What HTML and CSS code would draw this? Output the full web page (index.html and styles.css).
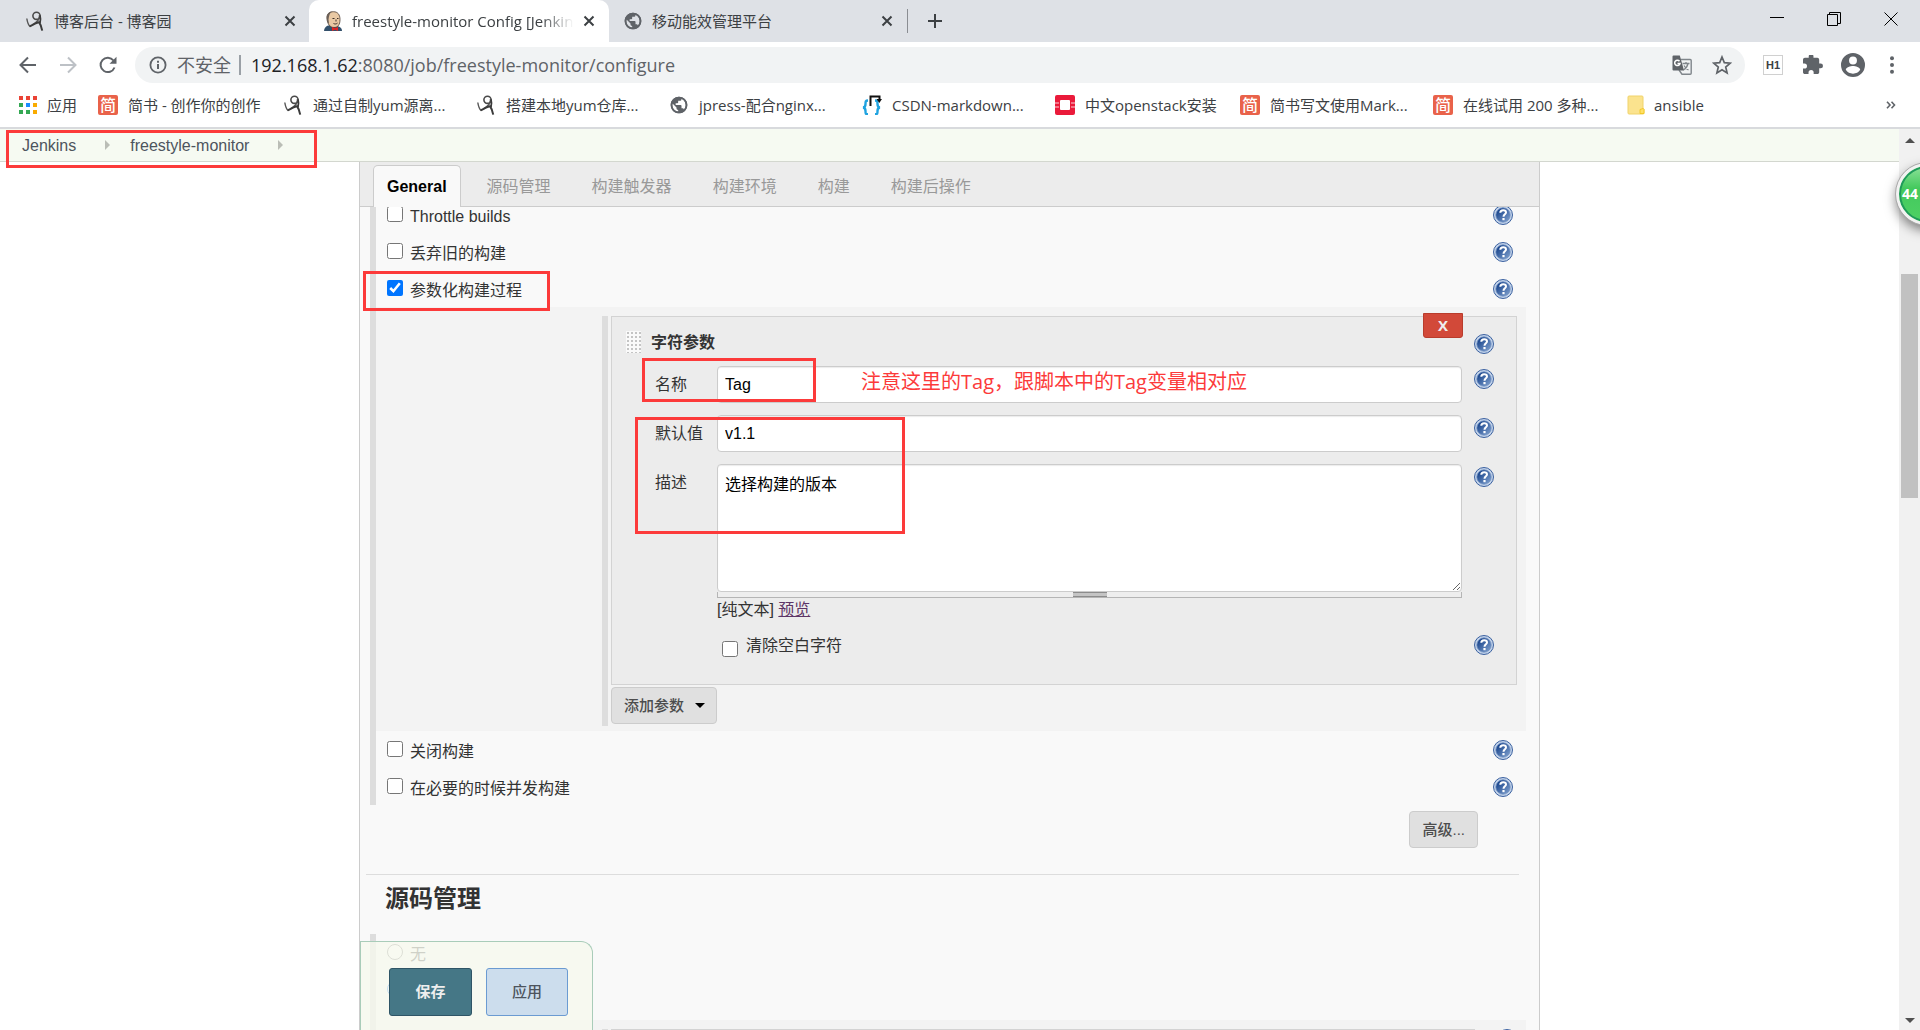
FILE: index.html
```html
<!DOCTYPE html>
<html lang="zh-CN">
<head>
<meta charset="utf-8">
<title>freestyle-monitor Config [Jenkins]</title>
<link rel="stylesheet" href="styles.css">
</head>
<body>
<svg class="defs" aria-hidden="true">
  <defs>
    <linearGradient id="help-fill" x1="0" y1="0" x2="1" y2="1">
      <stop offset="0.2" stop-color="#1f4a90"/><stop offset="1" stop-color="#86a6d2"/>
    </linearGradient>
    <symbol id="i-help" viewBox="0 0 20 20">
      <circle cx="10" cy="10" r="9.5" fill="#c3d3ea" stroke="#3c62a0"/>
      <circle cx="10" cy="10" r="7.2" fill="url(#help-fill)" stroke="#6f8fc0" stroke-width="0.8"/>
      <path d="M7.300 7.800C7.300 6 8.500 5.200 10.200 5.200C11.900 5.200 13 6 13 7.400C13 9.300 10.500 9.300 10.500 11.800" fill="none" stroke="#fff" stroke-width="2"/>
      <rect x="9.400" y="13" width="2.200" height="2.200" fill="#fff"/>
    </symbol>
    <symbol id="i-cnblogs" viewBox="0 0 18 20">
      <circle cx="10.500" cy="4.800" r="3.600" fill="none" stroke="#4a4a4a" stroke-width="1.600"/>
      <path d="M13.500 4C14 8 10.500 11.500 6.500 13.800M.8 7.500C1.400 11.500 2.200 13.900 4.200 15.700" fill="none" stroke="#555" stroke-width="1.400"/>
      <path d="M3.800 15.400C7 13.500 10 11.800 13 11.200C14.500 13.200 15.500 16 16.200 19.600" fill="none" stroke="#3b3b3b" stroke-width="2"/>
      <path d="M14 4.500C14.800 7 14.600 9.500 14 12" fill="none" stroke="#3b3b3b" stroke-width="1.700"/>
    </symbol>
    <symbol id="i-globe" viewBox="0 0 24 24">
      <path fill="#5f6368" d="M12 2C6.480 2 2 6.480 2 12s4.480 10 10 10 10-4.480 10-10S17.520 2 12 2zm-1 17.930c-3.950-.49-7-3.850-7-7.930 0-.62.080-1.210.210-1.790L9 15v1c0 1.100.9 2 2 2v1.930zm6.900-2.540c-.26-.81-1-1.390-1.900-1.390h-1v-3c0-.55-.45-1-1-1H8v-2h2c.55 0 1-.45 1-1V7h2c1.100 0 2-.9 2-2v-.41c2.930 1.190 5 4.060 5 7.410 0 2.080-.8 3.970-2.100 5.390z"/>
      <path fill="none" stroke="#5f6368" stroke-width="2" d="M12 3a9 9 0 100 18 9 9 0 100-18z"/>
    </symbol>
    <symbol id="i-x" viewBox="0 0 12 12"><path d="M1.500 1.500l9 9M10.500 1.500l-9 9" stroke="#3c4043" stroke-width="2" fill="none"/></symbol>
    <symbol id="i-caret" viewBox="0 0 12 6"><path d="M0 6L6 0l6 6z" fill="#505050"/></symbol>
  </defs>
</svg>

<header class="browser">
  <div class="tabstrip">
    <div class="tab">
      <svg class="fav"><use href="#i-cnblogs"/></svg>
      <span class="tab-title">博客后台 - 博客园</span>
      <button class="tab-close" aria-label="关闭标签页"><svg><use href="#i-x"/></svg></button>
    </div>
    <div class="tab tab-active">
      <svg class="fav" viewBox="0 0 18 20">
        <path d="M0 20C0 17 2 15.500 4 14.500L12 14.500C15 15.500 18 16.500 18 20z" fill="#33506b"/>
        <path d="M3 8C2.500 3 5.500.7 9.500.7S16 3.500 16 8.500 14 16.500 10 16.500 3.500 13 3 8z" fill="#e9c9a4" stroke="#4b3b31" stroke-width="0.800"/>
        <path d="M3 8.500C2 4 4 1 8 .6C5.500 2.500 5 5 4.500 8.500L5 12.500C3.500 12 3 10.500 3 8.500z" fill="#6b6058"/>
        <path d="M8.500 7.500h2M13 7.500h1.500M12 8.500v2M9.500 12.500c1.500.8 3 .5 4-.4" stroke="#3a2d26" stroke-width="1" fill="none"/>
        <path d="M8 16l3 1.200L14 16v4l-3-1.200L8 20z" fill="#e02424"/>
      </svg>
      <span class="tab-title">freestyle-monitor Config [Jenkins]</span>
      <button class="tab-close" aria-label="关闭标签页"><svg><use href="#i-x"/></svg></button>
    </div>
    <div class="tab">
      <svg class="fav"><use href="#i-globe"/></svg>
      <span class="tab-title">移动能效管理平台</span>
      <button class="tab-close" aria-label="关闭标签页"><svg><use href="#i-x"/></svg></button>
    </div>
    <button class="new-tab" aria-label="新标签页"><svg viewBox="0 0 16 16"><path d="M8 1v14M1 8h14" stroke="#3c4043" stroke-width="2"/></svg></button>
    <div class="window-controls">
      <button aria-label="最小化"><svg viewBox="0 0 14 14"><path d="M0 5.500h14" stroke="#000"/></svg></button>
      <button aria-label="还原"><svg viewBox="0 0 14 14"><path d="M.5 2.500h10v11H.5zM2.500 2.500V.5h11v11h-3" stroke="#000" fill="none"/></svg></button>
      <button aria-label="关闭"><svg viewBox="0 0 14 14"><path d="M.5.5l13 13M13.500.5l-13 13" stroke="#000"/></svg></button>
    </div>
  </div>
  <div class="toolbar">
    <button class="nav" aria-label="后退"><svg viewBox="0 0 18 18"><path d="M17 9H2M9 1.500L1.500 9 9 16.500" fill="none" stroke="#5f6368" stroke-width="2"/></svg></button>
    <button class="nav" aria-label="前进"><svg viewBox="0 0 18 18"><path d="M1 9h15M9 1.500L16.500 9 9 16.500" fill="none" stroke="#bdc1c6" stroke-width="2"/></svg></button>
    <button class="nav" aria-label="重新加载"><svg viewBox="0 0 18 18"><path d="M15.500 11.500A7.200 7.200 0 1 1 14.500 4.500" fill="none" stroke="#5f6368" stroke-width="2"/><path d="M17.500.8v7h-7z" fill="#5f6368"/></svg></button>
    <div class="omnibox">
      <svg class="info" viewBox="0 0 18 18"><circle cx="9" cy="9" r="7.600" fill="none" stroke="#5f6368" stroke-width="1.800"/><path d="M9 8v5M9 4.800v2" stroke="#5f6368" stroke-width="2"/></svg>
      <span class="insecure">不安全</span>
      <span class="url"><b>192.168.1.62</b>:8080/job/freestyle-monitor/configure</span>
      <button class="ico" aria-label="翻译"><svg viewBox="0 0 20 20"><path d="M8.500 4.500h9.700a1 1 0 0 1 1 1v12.700a1 1 0 0 1-1 1H10L7 15" fill="#f1f3f4" stroke="#80868b" stroke-width="1.400"/><path d="M10.500 8.500h7M14 7v1.500M16 8.500c-.5 2.500-2 5-4.500 6.500M12 10.500c1 2 2.500 3.500 4.500 4.500" stroke="#80868b" stroke-width="1.300" fill="none"/><path d="M1.500.5h6.300L12 15.500H1.500a1 1 0 0 1-1-1v-13a1 1 0 0 1 1-1z" fill="#5f6368"/><path d="M7.500 6.200A2.700 2.700 0 1 0 8 8.500H5.500" fill="none" stroke="#fff" stroke-width="1.500"/></svg></button>
      <button class="ico" aria-label="收藏"><svg viewBox="0 0 20 20"><path d="M10 2l2.300 5.600 6 .5-4.600 3.900 1.400 5.900L10 14.800l-5.100 3.100 1.400-5.900L1.700 8.100l6-.5z" fill="none" stroke="#5f6368" stroke-width="1.700"/></svg></button>
    </div>
    <div class="extensions">
      <button class="h1-ext">H1</button>
      <button class="ico" aria-label="扩展程序"><svg viewBox="2 2 21 21"><path fill="#5f6368" d="M20.500 11H19V7c0-1.100-.9-2-2-2h-4V3.500a2.500 2.500 0 0 0-5 0V5H4c-1.100 0-2 .9-2 2v3.800h1.500a2.700 2.700 0 0 1 0 5.400H2V20c0 1.100.9 2 2 2h3.800v-1.500a2.700 2.700 0 0 1 5.400 0V22H17c1.100 0 2-.9 2-2v-4h1.500a2.500 2.500 0 0 0 0-5z"/></svg></button>
      <button class="avatar" aria-label="用户"><svg viewBox="2 2 20 20"><path fill="#5f6368" d="M12 2a10 10 0 1 0 0 20 10 10 0 0 0 0-20zm0 3a3.300 3.300 0 1 1 0 6.600A3.300 3.300 0 0 1 12 5zm0 14.200a7.200 7.200 0 0 1-6-3.200c0-2 4-3.100 6-3.100s6 1.100 6 3.100a7.200 7.200 0 0 1-6 3.200z"/></svg></button>
      <button class="menu" aria-label="菜单"><svg viewBox="0 0 6 18"><g fill="#5f6368"><circle cx="3" cy="2.200" r="2"/><circle cx="3" cy="9" r="2"/><circle cx="3" cy="15.800" r="2"/></g></svg></button>
    </div>
  </div>
  <nav class="bookmarks">
    <a href="#" class="apps"><svg class="fav" viewBox="0 0 18 18"><g fill="#ea4335"><path d="M0 0h4v4H0zM7 0h4v4H7zM14 0h4v4h-4z"/></g><path fill="#34a853" d="M0 7h4v4H0zM0 14h4v4H0z"/><path fill="#1a8cff" d="M7 7h4v4H7z"/><path fill="#f9ab00" d="M14 7h4v4h-4zM14 14h4v4h-4z"/><path fill="#34a853" d="M7 14h4v4H7z"/></svg>应用</a>
    <a href="#" class="bm bm-short"><i class="jian">简</i>简书 - 创作你的创作</a>
    <a href="#" class="bm"><svg class="fav"><use href="#i-cnblogs"/></svg>通过自制yum源离...</a>
    <a href="#" class="bm"><svg class="fav"><use href="#i-cnblogs"/></svg>搭建本地yum仓库...</a>
    <a href="#" class="bm"><svg class="fav"><use href="#i-globe"/></svg>jpress-配合nginx...</a>
    <a href="#" class="bm"><svg class="fav" viewBox="0 0 20 20"><path d="M6 5.500C3.500 5.500 3.500 6.500 3.500 9S3 12.300 1 12.500C3 12.700 3.500 13.500 3.500 16S3.500 19.200 6 19.200M13 5.500C15.500 5.500 15.500 6.500 15.500 9S16 12.300 18 12.500C16 12.700 15.500 13.500 15.500 16S15.500 19.200 13 19.200" fill="none" stroke="#1fa3e0" stroke-width="2.400"/><path d="M8.500 11V1.500h9V5" fill="none" stroke="#111" stroke-width="2"/><path d="M14.500 4h5.500l-2.700 4z" fill="#111"/></svg>CSDN-markdown...</a>
    <a href="#" class="bm bm-short"><svg class="fav" viewBox="0 0 20 20"><rect width="20" height="20" rx="2" fill="#ea1a3a"/><path d="M0 7.500h4v1H0zM0 11.500h4v1H0zM16 7.500h4v1h-4zM16 11.500h4v1h-4z" fill="#fff" opacity=".8"/><rect x="5" y="5" width="10" height="10" rx="1" fill="#fff"/></svg>中文openstack安装</a>
    <a href="#" class="bm"><i class="jian">简</i>简书写文使用Mark...</a>
    <a href="#" class="bm"><i class="jian">简</i>在线试用 200 多种...</a>
    <a href="#" class="bm"><svg class="fav folder" viewBox="0 0 18 20"><path d="M2 1h13a1 1 0 0 1 1 1v11l1 1v4a1 1 0 0 1-1 1H2a1 1 0 0 1-1-1V2a1 1 0 0 1 1-1z" fill="#fbe38e" stroke="#f0d36b"/><path d="M13 18.500v-4l3-1 1 1v4z" fill="#ffe066" stroke="#f0c419" stroke-width=".8"/></svg>ansible</a>
    <button class="more" aria-label="更多书签"><svg viewBox="0 0 10 8"><path d="M1 .8L4 4 1 7.200M5.500.8L8.500 4l-3 3.200" fill="none" stroke="#5f6368" stroke-width="1.600"/></svg></button>
  </nav>
</header>

<div class="viewport">
  <div class="page">
    <nav class="breadcrumbs">
      <a href="#">Jenkins</a><i class="crumb-arrow"></i>
      <a href="#">freestyle-monitor</a><i class="crumb-arrow"></i>
      <span class="mark mark-crumbs"></span>
    </nav>
    <main class="config">
      <nav class="config-tabs">
        <a href="#" class="active">General</a>
        <a href="#">源码管理</a>
        <a href="#">构建触发器</a>
        <a href="#">构建环境</a>
        <a href="#">构建</a>
        <a href="#">构建后操作</a>
      </nav>
      <div class="scroller">
        <form class="form">
          <section class="group">
            <div class="row"><input type="checkbox" id="throttle"><label for="throttle">Throttle builds</label><button type="button" class="help" aria-label="帮助"><svg><use href="#i-help"/></svg></button></div>
            <div class="row"><input type="checkbox" id="discard"><label for="discard">丢弃旧的构建</label><button type="button" class="help" aria-label="帮助"><svg><use href="#i-help"/></svg></button></div>
            <div class="row"><input type="checkbox" id="param" checked><label for="param">参数化构建过程</label><button type="button" class="help" aria-label="帮助"><svg><use href="#i-help"/></svg></button><span class="mark mark-param"></span></div>
            <div class="nested">
              <div class="repeat">
                <div class="card">
                  <div class="card-head">
                    <svg class="grip"><defs><pattern id="dots" width="4" height="4" patternUnits="userSpaceOnUse"><rect width="4" height="4" fill="#fafafa"/><rect x="1" y="1" width="2" height="2" fill="#c4c4c4"/></pattern></defs><rect width="15" height="22" fill="url(#dots)"/></svg>
                    <strong>字符参数</strong>
                    <button type="button" class="delete">X</button>
                    <button type="button" class="help" aria-label="帮助"><svg><use href="#i-help"/></svg></button>
                  </div>
                  <div class="field">
                    <label for="f-name">名称</label>
                    <input type="text" id="f-name" value="Tag">
                    <button type="button" class="help" aria-label="帮助"><svg><use href="#i-help"/></svg></button>
                    <span class="mark mark-name"></span>
                    <span class="note">注意这里的Tag，跟脚本中的Tag变量相对应</span>
                  </div>
                  <div class="field">
                    <label for="f-default">默认值</label>
                    <input type="text" id="f-default" value="v1.1">
                    <button type="button" class="help" aria-label="帮助"><svg><use href="#i-help"/></svg></button>
                    <span class="mark mark-default"></span>
                  </div>
                  <div class="field field-desc">
                    <label for="f-desc">描述</label>
                    <div>
                      <textarea id="f-desc">选择构建的版本</textarea>
                      <div class="drag"><i></i></div>
                      <div class="plain">[纯文本] <a href="#">预览</a></div>
                    </div>
                    <button type="button" class="help" aria-label="帮助"><svg><use href="#i-help"/></svg></button>
                  </div>
                  <div class="field field-trim">
                    <div class="trim"><input type="checkbox" id="trim"><label for="trim">清除空白字符</label></div>
                    <button type="button" class="help" aria-label="帮助"><svg><use href="#i-help"/></svg></button>
                  </div>
                </div>
                <button type="button" class="btn add">添加参数<i class="down"></i></button>
              </div>
            </div>
            <div class="row"><input type="checkbox" id="disable"><label for="disable">关闭构建</label><button type="button" class="help" aria-label="帮助"><svg><use href="#i-help"/></svg></button></div>
            <div class="row"><input type="checkbox" id="concurrent"><label for="concurrent">在必要的时候并发构建</label><button type="button" class="help" aria-label="帮助"><svg><use href="#i-help"/></svg></button></div>
          </section>
          <div class="advanced"><button type="button" class="btn">高级...</button></div>
          <h2>源码管理</h2>
          <section class="group scm">
            <div class="row"><input type="radio" name="scm" id="scm-none"><label for="scm-none">无</label></div>
            <div class="row"><input type="radio" name="scm" aria-label="Git" checked></div>
            <div class="nested"><div class="repeat"><div class="card"></div></div><button type="button" class="help" aria-label="帮助"><svg><use href="#i-help"/></svg></button></div>
          </section>
        </form>
      </div>
      <div class="save-bar">
        <button type="submit" class="save">保存</button>
        <button type="button" class="apply">应用</button>
      </div>
    </main>
  </div>
  <div class="scrollbar">
    <svg class="arrow"><use href="#i-caret"/></svg>
    <div class="thumb"></div>
    <svg class="arrow arrow-down" viewBox="0 0 12 6"><path d="M0 0l6 6 6-6z" fill="#505050"/></svg>
  </div>
  <div class="ball">44</div>
</div>
</body>
</html>
```

FILE: styles.css
```css
* { box-sizing: border-box; }

body {
  margin: 0;
  height: 100vh;
  display: flex;
  flex-direction: column;
  overflow: hidden;
  background: #fff;
  color: #333;
  font: 16px/24px "Liberation Sans", "Noto Sans CJK SC", sans-serif;
}

button {
  margin: 0;
  padding: 0;
  border: 0;
  background: none;
  font: inherit;
  color: inherit;
  flex: none;
}

button svg { display: block; width: 100%; height: 100%; }
a { color: inherit; text-decoration: none; white-space: nowrap; }
i { font-style: normal; }
.defs { position: absolute; width: 0; height: 0; }

/* ---------- browser chrome ---------- */
.browser {
  flex: none;
  font: 15px/20px "Open Sans", "Noto Sans CJK SC", sans-serif;
  color: #3c4043;
  border-bottom: 2px solid #d8dadd;
}

.tabstrip { display: flex; height: 42px; background: #dee1e6; }

.tab {
  display: flex;
  align-items: center;
  width: 300px;
  padding: 0 14px 0 14px;
  gap: 9px;
}
.tab:first-child { width: 309px; padding-left: 25px; padding-right: 13px; }
.tab-active { background: #fff; border-radius: 10px 10px 0 0; }
.tab:nth-child(3) { width: 298px; }
.fav { flex: none; width: 20px; height: 20px; }
.tab-title {
  flex: 1;
  overflow: hidden;
  white-space: nowrap;
  line-height: 24px;
}
.tab-active .tab-title {
  -webkit-mask-image: linear-gradient(90deg, #000 85%, transparent);
  mask-image: linear-gradient(90deg, #000 85%, transparent);
}
.tab-close { width: 12px; height: 12px; }
.new-tab { width: 16px; height: 16px; margin: 13px 0 0 20px; }
.new-tab::before {
  content: "";
  display: block;
  width: 1px;
  height: 24px;
  margin: -4px 0 -20px -20px;
  background: #8a8d92;
}

.window-controls { display: flex; gap: 43px; margin: 12px 22px 0 auto; }
.window-controls button { width: 14px; height: 14px; }

.toolbar { display: flex; align-items: center; height: 46px; padding-left: 19px; }
.nav { width: 18px; height: 18px; margin-right: 22px; }
.nav:nth-child(3) { margin-right: 18px; }
.omnibox {
  flex: 1;
  display: flex;
  align-items: center;
  height: 36px;
  padding: 0 13px 0 14px;
  border-radius: 18px;
  background: #f1f3f4;
  color: #5f6368;
  font-size: 18px;
}
.info { width: 18px; height: 18px; margin-right: 10px; }
.insecure { padding-right: 8px; border-right: 2px solid #9aa0a6; white-space: nowrap; }
.url { flex: 1; padding-left: 10px; white-space: nowrap; }
.url b { font-weight: 400; color: #202124; }
.ico { width: 20px; height: 20px; }
.omnibox .ico + .ico { margin-left: 20px; }
.extensions { display: flex; align-items: center; gap: 20px; padding: 0 25px 0 18px; }
.h1-ext {
  width: 20px;
  height: 20px;
  border: 1px solid #d0d0d0;
  background: #fff;
  font: bold 11px/18px "Liberation Sans", sans-serif;
}
.avatar { width: 24px; height: 24px; margin-left: -2px; }
.menu { width: 6px; height: 18px; margin-left: 4px; }

.bookmarks { display: flex; align-items: center; height: 39px; padding: 0 24px 5px 19px; }
.bookmarks a { display: flex; flex: none; align-items: center; gap: 10px; }
.apps { width: 79px; }
.apps .fav { height: 18px; width: 18px; }
.bm { width: 193px; }
.bm-short { width: 185px; }
.bookmarks a:nth-last-of-type(1) { width: auto; gap: 8px; }
.jian {
  width: 20px;
  height: 20px;
  border-radius: 2px;
  background: #e9624a;
  color: #fff;
  font-size: 16px;
  font-weight: 500;
  text-align: center;
}
.more { width: 10px; height: 8px; margin-left: auto; }

/* ---------- page ---------- */
.viewport { flex: 1; min-height: 0; display: flex; position: relative; overflow: hidden; }
.page { flex: 1; min-width: 0; display: flex; flex-direction: column; }

.breadcrumbs {
  flex: none;
  display: flex;
  position: relative;
  height: 33px;
  padding: 5px 22px 3px;
  border-bottom: 1px solid #d3d7cf;
  background: #f6faf2;
  color: #4d545d;
}
.crumb-arrow {
  margin: 6px 20px 0 29px;
  border: 5px solid transparent;
  border-left-color: #babdb6;
  border-right: 0;
  height: 0;
}

.config {
  flex: 1;
  min-height: 0;
  width: 100%;
  max-width: 1181px;
  margin: 0 auto;
  display: flex;
  flex-direction: column;
  position: relative;
  border: solid #ccc;
  border-width: 0 1px;
  background: #f9f9f9;
}

.config-tabs {
  flex: none;
  display: flex;
  align-items: flex-end;
  height: 45px;
  padding-left: 13px;
  border-bottom: 1px solid #ccc;
  background: #ececec;
  color: #999;
}
.config-tabs a { height: 41px; padding: 10px 0 7px; margin-left: 41px; }
.config-tabs a.active {
  height: 42px;
  margin: 0 -15px -1px 0;
  padding: 9px 13px;
  border: 1px solid #ccc;
  border-bottom: 0;
  border-radius: 5px 5px 0 0;
  background: #f9f9f9;
  color: #000;
  font-weight: bold;
}

/* the form is scrolled under the tab bar */
.scroller { flex: 1; min-height: 0; overflow: hidden; }
.form { margin-top: -11px; }

.group { margin: 0 13px 0 10px; border-left: 6px solid #ddd; }
.row {
  display: flex;
  align-items: flex-start;
  position: relative;
  height: 37px;
  padding: 9px 13px 0 11px;
}
input[type="checkbox"], input[type="radio"] { flex: none; width: 16px; height: 16px; margin: 0; }
.row > input { margin: 1px 7px 0 0; }
.help { width: 20px; height: 20px; margin-left: auto; }

.nested { display: flex; padding: 9px 9px 5px 226px; background: #f3f3f3; }
.repeat { flex: 1; border-left: 6px solid #ddd; padding: 0 0 2px 3px; }
.card { border: 1px solid #d3d3d3; background: #ececec; padding: 0 22px 0 43px; }
.card-head { display: flex; align-items: flex-start; height: 49px; margin-left: -29px; }
.grip { width: 15px; height: 22px; margin: 14px 10px 0 0; }
.card-head strong { margin-top: 14px; }
.card-head .help { margin: 17px 0 0 11px; }
.delete {
  width: 40px;
  height: 25px;
  margin: -4px 0 0 auto;
  border: 1px solid #b93c2c;
  border-radius: 0 0 3px 3px;
  background: #d24939;
  color: #eee;
  font: bold 15px/23px "Open Sans", sans-serif;
}

.field {
  display: grid;
  grid-template-columns: 62px 1fr 32px;
  align-items: start;
  position: relative;
  margin-bottom: 12px;
}
.field > label { line-height: 37px; }
.field .help { margin-top: 3px; }
input[type="text"], textarea {
  display: block;
  width: 100%;
  height: 37px;
  padding: 0 7px;
  border: 1px solid #ccc;
  border-radius: 4px;
  background: #fff;
  box-shadow: inset 0 1px 1px rgba(0, 0, 0, .08);
  font: inherit;
  color: #000;
}
textarea { height: 128px; padding: 8px 7px; }
.drag { height: 6px; border: solid #b5b5b5; border-width: 0 1px 1px; background: #eee; }
.drag i { display: block; width: 34px; height: 5px; margin: 0 auto; border: solid #8c8c8c; border-width: 1px 0; background: #c4c4c4; }
.plain a { color: #5c3566; text-decoration: underline; }
.field-desc { margin-bottom: 10px; }
.field-trim { grid-template-columns: 1fr 32px; margin-bottom: 28px; height: 24px; }
.trim { display: flex; gap: 8px; padding-left: 67px; }
.trim input { margin-top: 9px; }
.trim label { line-height: 28px; }

.btn {
  height: 37px;
  padding: 0 12px;
  border: 1px solid #ccc;
  border-radius: 4px;
  background: #e0e0e0;
  color: #4d4d4d;
  font-size: 15px;
  font-weight: 500;
}
.add { display: flex; align-items: center; margin-top: 2px; }
.down { margin: 0 -1px 0 11px; border: 5px solid transparent; border-top-color: #000; border-bottom: 0; }

.advanced { display: flex; justify-content: flex-end; margin-right: 61px; padding: 6px 0 26px; }

h2 {
  margin: 0 20px 0 6px;
  padding: 8px 19px 19px;
  border-top: 1px solid #ddd;
  font-size: 24px;
  line-height: 32px;
}
.scm .nested { margin-top: 12px; padding-right: 9px; min-height: 40px; }
.scm .nested .repeat { margin-right: 22px; }
.scm .nested .card { height: 40px; }

.save-bar {
  position: absolute;
  left: 0;
  bottom: 0;
  display: flex;
  gap: 14px;
  padding: 26px 24px 14px 28px;
  border: 1px solid #a9ccb9;
  border-bottom: 0;
  border-top-right-radius: 12px;
  background: rgba(246, 249, 238, .8);
}
.save-bar button {
  width: 83px;
  height: 48px;
  border: 1px solid #2f5566;
  border-radius: 3px;
  background: #457786;
  color: #eee;
  font-size: 15px;
  font-weight: bold;
}
.save-bar .apply { width: 82px; border-color: #6b9bd2; background: #ccdded; color: #4d545d; font-weight: 500; }

/* ---------- annotations ---------- */
.mark { position: absolute; border: 3px solid #fc3a3a; pointer-events: none; z-index: 2; }
.mark-crumbs { left: 6px; top: 1px; width: 311px; height: 38px; }
.mark-param { left: -13px; top: 1px; width: 187px; height: 40px; }
.mark-name { left: -13px; top: -8px; width: 174px; height: 44px; }
.mark-default { left: -20px; top: 2px; width: 270px; height: 117px; }
.note {
  position: absolute;
  left: 206px;
  top: 4px;
  color: #fc3a3a;
  font: 20px/24px "Open Sans", "Noto Sans CJK SC", sans-serif;
  white-space: nowrap;
}

/* ---------- scrollbar and floating ball ---------- */
.scrollbar {
  flex: none;
  width: 21px;
  display: flex;
  flex-direction: column;
  align-items: center;
  padding: 9px 0 7px;
  background: #f1f1f1;
}
.arrow { flex: none; width: 10px; height: 5px; }
.thumb { width: 17px; height: 224px; margin: 131px 0 auto; background: #c1c1c1; }
.ball {
  position: absolute;
  top: 34px;
  right: -38px;
  width: 62px;
  height: 62px;
  padding-left: 3px;
  border: 3px solid #f2f2f2;
  border-radius: 50%;
  outline: 1px solid #aaa;
  background: linear-gradient(#8ee29a, #43c95d 40%, #4ed164);
  box-shadow: inset 0 0 0 2px #1f9a5a, 0 5px 12px rgba(0, 0, 0, .5);
  color: #fff;
  font: bold 14px/56px "Open Sans", sans-serif;
}
```
